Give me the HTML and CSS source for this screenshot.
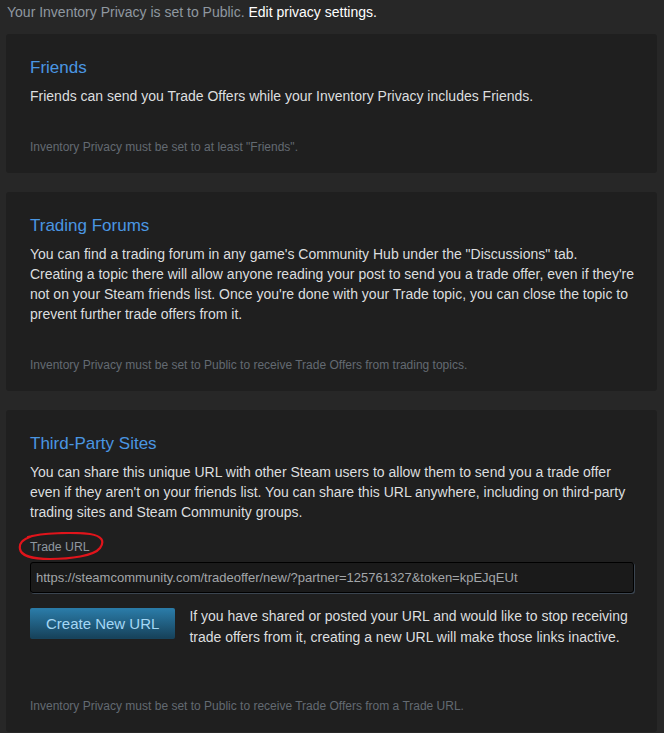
FILE: index.html
```html
<!DOCTYPE html>
<html lang="en">

<head>
    <meta charset="UTF-8">
    <meta name="viewport" content="width=device-width, initial-scale=1.0">
    <title>Trade Offers - Who can send me Trade Offers?</title>
    <link rel="stylesheet" href="styles.css">
</head>

<body>
    <div class="page">
        <div class="privacy-line">
            Your Inventory Privacy is set to Public. <a href="#" class="privacy-link">Edit privacy settings.</a>
        </div>

        <div class="access-section">
            <h2 class="section-title">Friends</h2>
            <div class="section-desc">Friends can send you Trade Offers while your Inventory Privacy includes Friends.</div>
            <div class="section-note">Inventory Privacy must be set to at least "Friends".</div>
        </div>

        <div class="access-section">
            <h2 class="section-title">Trading Forums</h2>
            <div class="section-desc">You can find a trading forum in any game's Community Hub under the "Discussions" tab.<br>Creating a topic there will allow anyone reading your post to send you a trade offer, even if they're not on your Steam friends list. Once you're done with your Trade topic, you can close the topic to prevent further trade offers from it.</div>
            <div class="section-note">Inventory Privacy must be set to Public to receive Trade Offers from trading topics.</div>
        </div>

        <div class="access-section">
            <h2 class="section-title">Third-Party Sites</h2>
            <div class="section-desc">You can share this unique URL with other Steam users to allow them to send you a trade offer even if they aren't on your friends list. You can share this URL anywhere, including on third-party trading sites and Steam Community groups.</div>

            <div class="url-label">
                Trade URL
                <!-- red marker ring drawn over the label -->
                <svg class="url-ring" width="88" height="30" viewBox="0 0 88 30">
                    <path d="M10 5 C24 1 54 0 72 2 C84 4 87 9 82 16 C76 24 52 27 32 27 C16 27 3 24 2 17 C1 11 4 8 14 4" fill="none" stroke="#e0141b" stroke-width="2.2" stroke-linecap="round"/>
                </svg>
            </div>
            <input class="url-input" type="text" readonly value="https://steamcommunity.com/tradeoffer/new/?partner=125761327&amp;token=kpEJqEUt">

            <div class="url-row">
                <button type="button" class="new-url-btn">Create New URL</button>
                <div class="url-row-desc">If you have shared or posted your URL and would like to stop receiving trade offers from it, creating a new URL will make those links inactive.</div>
            </div>

            <div class="section-note">Inventory Privacy must be set to Public to receive Trade Offers from a Trade URL.</div>
        </div>
    </div>
</body>

</html>
```

FILE: styles.css
```css
body {
    margin: 0;
    padding: 0;
    background-color: #272727;
    font-family: Arial, "Liberation Sans", sans-serif;
    font-size: 14px;
    color: #dcdedf;
}

.page {
    padding: 2px 7px 0 6px;
}

.privacy-line {
    padding-left: 1px;
    line-height: 20px;
    color: #8f98a0;
    margin-bottom: 12px;
}

.privacy-link {
    color: #ffffff;
    text-decoration: none;
}

.access-section {
    background-color: #1f1f1f;
    border-radius: 3px;
    padding: 23px 18px 18px 24px;
    margin-bottom: 19px;
}

.section-title {
    margin: 0;
    font-size: 17px;
    font-weight: normal;
    line-height: 22px;
    color: #4a96e2;
}

.section-desc {
    margin-top: 7px;
    line-height: 20px;
}

.section-note {
    margin-top: 33px;
    font-size: 12px;
    line-height: 16px;
    color: #636a72;
}

.url-label {
    position: relative;
    margin-top: 17px;
    font-size: 12.3px;
    line-height: 16px;
    color: #8f98a0;
}

.url-ring {
    position: absolute;
    left: -12px;
    top: -7px;
}

.url-input {
    display: block;
    box-sizing: border-box;
    width: 604px;
    height: 31px;
    margin-top: 7px;
    padding: 0 5px;
    background-color: #1a1a1a;
    border: 1px solid #000000;
    border-radius: 3px;
    box-shadow: 1px 1px 0 #3b4550;
    font-family: Arial, "Liberation Sans", sans-serif;
    font-size: 13px;
    color: #a3a6a9;
    outline: none;
}

.url-row {
    display: flex;
    align-items: flex-start;
    gap: 14px;
    margin-top: 15px;
}

.url-row-desc {
    line-height: 21px;
    margin-top: -2px;
}

.new-url-btn {
    flex-shrink: 0;
    height: 31px;
    padding: 0 16px;
    border: none;
    border-radius: 2px;
    background: linear-gradient(to bottom, #2a7aa6 5%, #17435c 95%);
    color: #a4d7f5;
    font-family: Arial, "Liberation Sans", sans-serif;
    font-size: 15px;
    cursor: pointer;
}

.url-row + .section-note {
    margin-top: 50px;
}
```
